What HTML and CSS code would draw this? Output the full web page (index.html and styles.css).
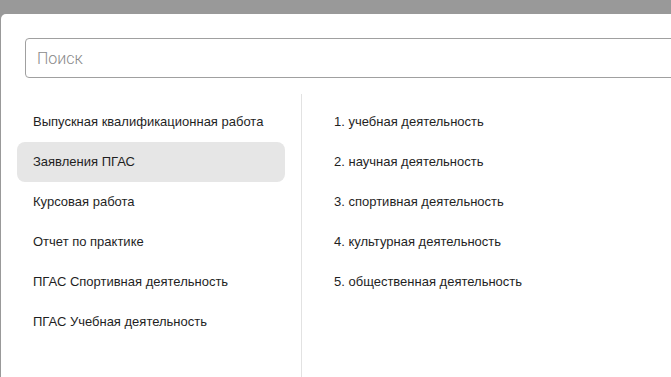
FILE: index.html
```html
<!DOCTYPE html>
<html lang="ru">
<head>
<meta charset="utf-8">
<link rel="stylesheet" href="styles.css">
</head>
<body>
<div class="modal">
  <div class="search-wrap">
    <input class="search" type="text" placeholder="Поиск">
  </div>
  <div class="content">
    <ul class="list left">
      <li class="item">Выпускная квалификационная работа</li>
      <li class="item active">Заявления ПГАС</li>
      <li class="item">Курсовая работа</li>
      <li class="item">Отчет по практике</li>
      <li class="item">ПГАС Спортивная деятельность</li>
      <li class="item">ПГАС Учебная деятельность</li>
    </ul>
    <div class="divider"></div>
    <ul class="list right">
      <li class="item">1. учебная деятельность</li>
      <li class="item">2. научная деятельность</li>
      <li class="item">3. спортивная деятельность</li>
      <li class="item">4. культурная деятельность</li>
      <li class="item">5. общественная деятельность</li>
    </ul>
  </div>
</div>
</body>
</html>
```

FILE: styles.css
```css
html, body {
  margin: 0;
  padding: 0;
  height: 100%;
  overflow: hidden;
  background: #999999;
}
body {
  font-family: "Liberation Sans", Arial, sans-serif;
}
.modal {
  margin: 14px 0 0 1px;
  height: calc(100vh - 14px);
  background: #fff;
  border-radius: 5px 0 0 0;
  box-sizing: border-box;
  overflow: hidden;
}
.search-wrap {
  padding: 24px 0 16px 24px;
}
.search {
  display: block;
  box-sizing: border-box;
  width: calc(100% + 20px);
  height: 40px;
  border: 1px solid #a0a0a0;
  border-radius: 4px;
  padding: 0 11px;
  font-family: Roboto, "Liberation Sans", Arial, sans-serif;
  font-size: 16px;
  font-weight: 300;
  color: #333;
  outline: none;
  background: #fff;
}
.search::placeholder {
  color: #8a8a8a;
}
.content {
  display: flex;
  align-items: stretch;
  height: 100%;
}
.list {
  list-style: none;
  margin: 0;
  padding: 8px 0 0 16px;
}
.list.left {
  width: 268px;
}
.divider {
  width: 1px;
  background: #e2e2e2;
  margin-left: 16px;
}
.list.right {
  width: 320px;
}
.item {
  height: 40px;
  display: flex;
  align-items: center;
  padding-left: 16px;
  padding-bottom: 2px;
  box-sizing: border-box;
  font-size: 13px;
  color: #1f1f1f;
  border-radius: 8px;
}
.item.active {
  background: #e6e6e6;
}
```
